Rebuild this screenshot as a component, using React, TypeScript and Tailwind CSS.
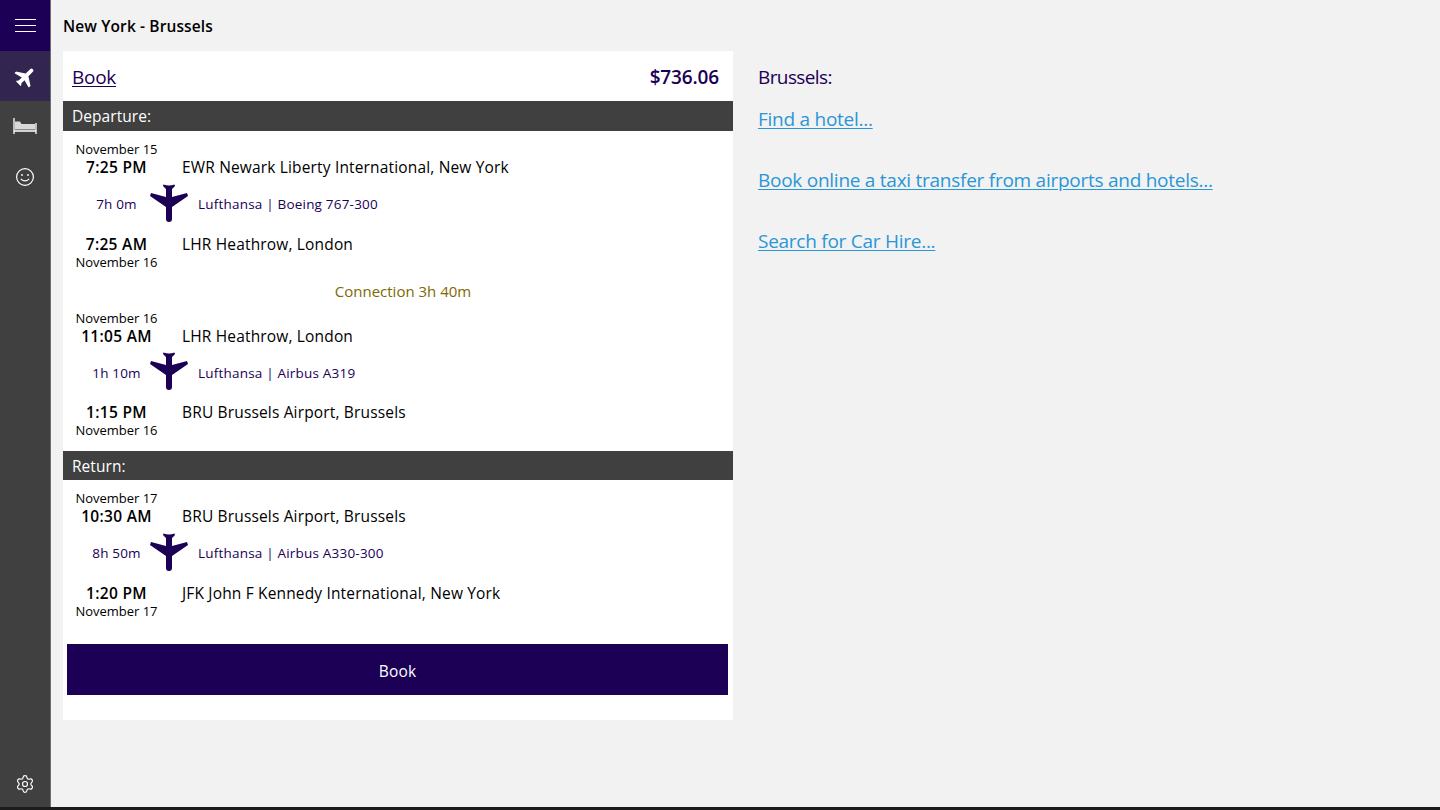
import { Settings } from 'lucide-react';

const FONT = 'font-["Open_Sans",sans-serif]';

function PlaneDown() {
  return (
    <svg width="38" height="38" viewBox="0 0 38 38" className="shrink-0 text-[#1b0056]" fill="currentColor">
      <path d="M13.5 0.5 Q19 2.5 24.5 0.5 L25 2 L22 5 V13 L37 9 L38 12 L22 23 V35 Q22 38 19 38 Q16 38 16 35 V23 L0 12 L1 9 L16 13 V5 L13 2 Z" />
    </svg>
  );
}

interface SegmentProps {
  fromDate: string;
  fromTime: string;
  fromPlace: string;
  duration: string;
  carrier: string;
  toTime: string;
  toDate: string;
  toPlace: string;
  compact?: boolean;
}

function Segment({ fromDate, fromTime, fromPlace, duration, carrier, toTime, toDate, toPlace, compact }: SegmentProps) {
  return (
    <div className="text-black">
      <div className="flex h-[18px] items-center">
        <div className="w-[105px] pl-[2px] text-center text-[13px] tracking-[-0.02px]">{fromDate}</div>
      </div>
      <div className="flex h-[18px] items-center">
        <div className="w-[105px] pl-[2px] text-center text-[15.5px] font-semibold tracking-[0.3px]">{fromTime}</div>
        <div className="ml-[14px] text-[15.5px] tracking-[0.16px]">{fromPlace}</div>
      </div>
      <div className={`flex items-center pb-[4px] text-[#1b0056] ${compact ? 'h-[58px]' : 'h-[59px]'}`}>
        <div className="w-[87px] pl-[20px] text-center text-[13.5px] tracking-[0.15px]">{duration}</div>
        <div className="mb-[4px]"><PlaneDown /></div>
        <div className="ml-[10px] text-[13.5px] tracking-[0.2px]">{carrier}</div>
      </div>
      <div className="flex h-[18px] items-center">
        <div className="w-[105px] pl-[2px] text-center text-[15.5px] font-semibold tracking-[0.3px]">{toTime}</div>
        <div className="ml-[14px] text-[15.5px] tracking-[0.16px]">{toPlace}</div>
      </div>
      <div className="flex h-[18px] items-center">
        <div className="w-[105px] pl-[2px] text-center text-[13px] tracking-[-0.02px]">{toDate}</div>
      </div>
    </div>
  );
}

function SectionHeader({ label, height }: { label: string; height: string }) {
  return <div className={`flex items-center bg-[#404040] pl-[9px] pt-[2px] text-[15.5px] tracking-[0.05px] text-white ${height}`}>{label}</div>;
}

function Sidebar() {
  return (
    <div className="flex h-full w-[51px] shrink-0 flex-col border-r border-[#6e6e6e] bg-[#404040] text-white">
      <div className="flex h-[51px] items-center justify-center bg-[#1b0056]">
        <div className="flex w-[21px] flex-col gap-[5px]">
          <div className="h-px bg-white" />
          <div className="h-px bg-white" />
          <div className="h-px bg-white" />
        </div>
      </div>
      <div className="flex h-[50px] items-center justify-center bg-[#32254f]">
        <svg width="21" height="21" viewBox="0 0 38 38" fill="currentColor" className="rotate-[-135deg] -scale-x-100">
          <path d="M13.5 0.5 L24.5 0.5 L25 2 L22.5 5 V13 L37 9 L38 13 L22.5 23 V35 Q22 38 19 38 Q16 38 15.5 35 V23 L0 13 L1 9 L15.5 13 V5 L13 2 Z" />
        </svg>
      </div>
      <div className="flex h-[50px] items-center justify-center">
        <svg width="24" height="16" viewBox="0 0 24 16" fill="none" stroke="currentColor">
          <path d="M1 0 V16 M23 5 V16 M1 13 H23" strokeWidth="1.3" />
          <path d="M2 3.5 H7 L8.5 6 H22 V11.5 H2 Z" fill="#d9d9d9" stroke="none" />
        </svg>
      </div>
      <div className="flex h-[50px] items-center justify-center pt-[1px]">
        <svg width="20" height="20" viewBox="0 0 20 20" fill="none" stroke="currentColor" strokeWidth="1.2">
          <circle cx="10" cy="10" r="8.4" />
          <circle cx="7" cy="8" r="0.9" fill="currentColor" stroke="none" />
          <circle cx="13" cy="8" r="0.9" fill="currentColor" stroke="none" />
          <path d="M5.8 11.8 Q10 16 14.2 11.8" />
        </svg>
      </div>
      <div className="mt-auto flex h-[48px] items-center justify-center pt-[2px]">
        <Settings size={20} strokeWidth={1.4} />
      </div>
    </div>
  );
}

export default function App() {
  return (
    <div className={`flex h-[810px] w-[1440px] flex-col overflow-hidden bg-[#f2f2f2] ${FONT}`}>
      <div className="flex min-h-0 flex-1">
        <Sidebar />
        <div className="flex-1 pl-[12px]">
          <div className="flex h-[51px] items-center pt-[3px] text-[15.5px] font-semibold tracking-[0.12px] text-black">New York - Brussels</div>
          <div className="flex items-start">
            <div className="h-[669px] w-[670px] bg-white">
              <div className="flex h-[50px] items-center justify-between pl-[9px] pr-[14px] pt-[2px]">
                <a className="text-[19px] tracking-[-0.26px] text-[#1b0056] underline underline-offset-2">Book</a>
                <div className="text-[19px] font-semibold tracking-[-0.15px] text-[#1b0056]">$736.06</div>
              </div>
              <SectionHeader label="Departure:" height="h-[30px]" />
              <div className="pt-[10px]">
                <Segment
                  fromDate="November 15"
                  fromTime="7:25 PM"
                  fromPlace="EWR Newark Liberty International, New York"
                  duration="7h 0m"
                  carrier="Lufthansa | Boeing 767-300"
                  toTime="7:25 AM"
                  toDate="November 16"
                  toPlace="LHR Heathrow, London"
                />
                <div className="flex h-[38px] items-center justify-center pl-[10px] text-[15px] tracking-[0px] text-[#7d6900]">Connection 3h 40m</div>
                <Segment
                  compact
                  fromDate="November 16"
                  fromTime="11:05 AM"
                  fromPlace="LHR Heathrow, London"
                  duration="1h 10m"
                  carrier="Lufthansa | Airbus A319"
                  toTime="1:15 PM"
                  toDate="November 16"
                  toPlace="BRU Brussels Airport, Brussels"
                />
              </div>
              <div className="mt-[11px]">
                <SectionHeader label="Return:" height="h-[29px]" />
              </div>
              <div className="pt-[10px]">
                <Segment
                  fromDate="November 17"
                  fromTime="10:30 AM"
                  fromPlace="BRU Brussels Airport, Brussels"
                  duration="8h 50m"
                  carrier="Lufthansa | Airbus A330-300"
                  toTime="1:20 PM"
                  toDate="November 17"
                  toPlace="JFK John F Kennedy International, New York"
                />
              </div>
              <div className="mx-[4px] mt-[23px] flex h-[51px] w-[661px] items-center justify-center bg-[#1b0056] pt-[4px] text-[15.5px] tracking-[0.2px] text-white">Book</div>
            </div>
            <div className="ml-[25px] flex flex-col items-start pt-[13px] text-[19px] tracking-[-0.26px]">
              <div className="h-[27px] leading-[27px] tracking-[-0.6px] text-[#1b0056]">Brussels:</div>
              <a className="mt-[15px] h-[27px] leading-[27px] text-[#2a96d6] underline underline-offset-2">Find a hotel...</a>
              <a className="mt-[34px] h-[27px] leading-[27px] text-[#2a96d6] underline underline-offset-2">Book online a taxi transfer from airports and hotels...</a>
              <a className="mt-[34px] h-[27px] leading-[27px] text-[#2a96d6] underline underline-offset-2">Search for Car Hire...</a>
            </div>
          </div>
        </div>
      </div>
      <div className="h-[3px] bg-[#1c1c1c]" />
    </div>
  );
}
